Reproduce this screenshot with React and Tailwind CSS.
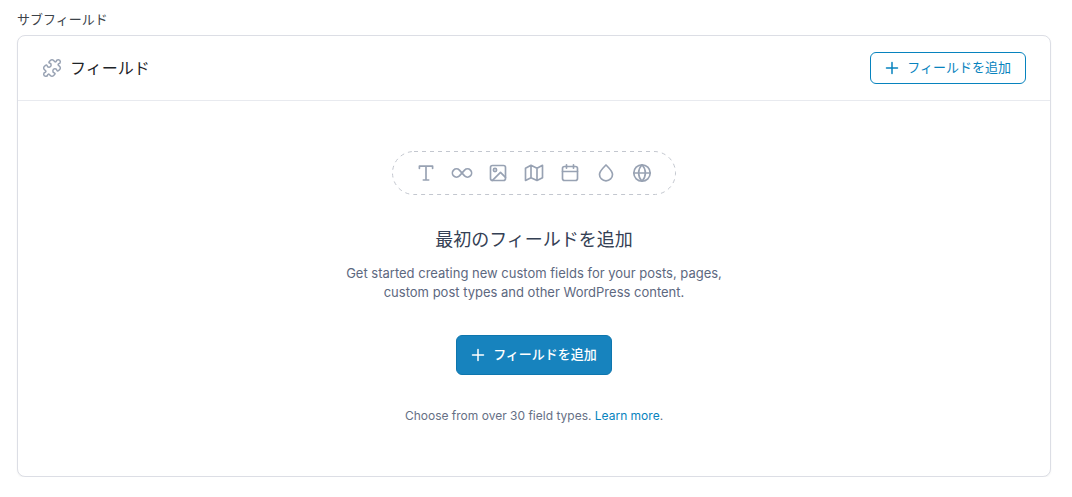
import React from "react";
import { Puzzle } from "lucide-react";

const PlusIcon = () => (
  <svg
    width="14"
    height="14"
    viewBox="0 0 14 14"
    stroke="currentColor"
    strokeWidth="1.5"
    strokeLinecap="round"
    aria-hidden="true"
  >
    <path d="M7 1.5v11M1.5 7h11" />
  </svg>
);

const FieldTypes = () => (
  <svg
    width="284"
    height="44"
    viewBox="0 0 284 44"
    fill="none"
    stroke="#98a2b3"
    strokeWidth="1.67"
    strokeLinecap="round"
    strokeLinejoin="round"
    aria-hidden="true"
  >
    <rect
      x="0.5"
      y="0.5"
      width="283"
      height="43"
      rx="21.5"
      stroke="#c3c7cf"
      strokeWidth="1"
      strokeLinecap="butt"
      strokeDasharray="4 4"
    />
    {/* text */}
    <path d="M27.4 17.5V15.2h13.2v2.3M34 15.2V29M31.3 29h5.4" />
    {/* infinity */}
    <path d="M72.6 24.9a4.1 4.1 0 1 0 0-5.8l-5.2 5.8a4.1 4.1 0 1 1 0-5.8z" />
    {/* image */}
    <rect x="98.5" y="14.5" width="15" height="15" rx="2" />
    <circle cx="103" cy="19" r="1.6" />
    <path d="M100.5 29.3l8-8 5 5" />
    {/* map */}
    <path d="M133.5 17.3v12.2l5.5-2.8 6 2.8 5.5-2.8V14.3l-5.5 2.9-6-2.9zM139 14.3v12.4M145 17.2v12.3" />
    {/* calendar */}
    <rect x="170.5" y="15.5" width="15" height="14" rx="2" />
    <path d="M170.5 20.5h15M174.5 13.8v3.4M181.5 13.8v3.4" />
    {/* drop */}
    <path d="M214 14c2.5 2.6 6.5 5.9 6.5 9.5a6.5 6.3 0 0 1-13 0c0-3.6 4-6.9 6.5-9.5z" />
    {/* globe */}
    <circle cx="250" cy="22" r="8.2" />
    <path d="M241.8 22h16.4M250 13.8c4.5 4.8 4.5 11.6 0 16.4c-4.5-4.8-4.5-11.6 0-16.4z" />
  </svg>
);

const App = () => {
  return (
    <main
      lang="ja"
      className="pt-[9px] pr-[21px] pl-[17px] font-['Inter','Noto_Sans_CJK_JP',sans-serif]"
    >
      <h2 className="text-[13px] leading-5 text-[#3c434a]">サブフィールド</h2>
      <section className="mt-1.5 rounded-lg border border-[#dcdee5] bg-white shadow-xs">
        <header className="flex items-center justify-between border-b border-[#e8eaef] px-6 py-4">
          <div className="flex items-center gap-2">
            <Puzzle size={20} strokeWidth={1.8} color="#98a2b3" />
            <h3 className="text-base text-[#1d2327]">フィールド</h3>
          </div>
          <button
            type="button"
            className="flex h-8 items-center gap-2 rounded-md border border-[#0783be] px-3.5 text-[13px] text-[#0783be]"
          >
            <PlusIcon />
            フィールドを追加
          </button>
        </header>
        <div className="flex flex-col items-center px-6 pt-[50px] pb-[52px] text-center">
          <FieldTypes />
          <h3 className="mt-[31px] text-lg leading-7 text-[#344054]">
            最初のフィールドを追加
          </h3>
          <p className="mt-2.5 max-w-[380px] text-[13px] leading-[19px] text-[#5d6880]">
            Get started creating new custom fields for your posts, pages, custom
            post types and other WordPress content.
          </p>
          <button
            type="button"
            className="mt-[33px] flex h-10 items-center gap-2 rounded-md border border-[#0e76ae] bg-[#1783be] px-3.5 text-[13px] font-medium text-white"
          >
            <PlusIcon />
            フィールドを追加
          </button>
          <p className="mt-[33px] text-xs leading-4 text-[#667085]">
            Choose from over 30 field types.{" "}
            <a href="#learn-more" className="text-[#0783be]">
              Learn more
            </a>
            .
          </p>
        </div>
      </section>
    </main>
  );
};

export default App;
